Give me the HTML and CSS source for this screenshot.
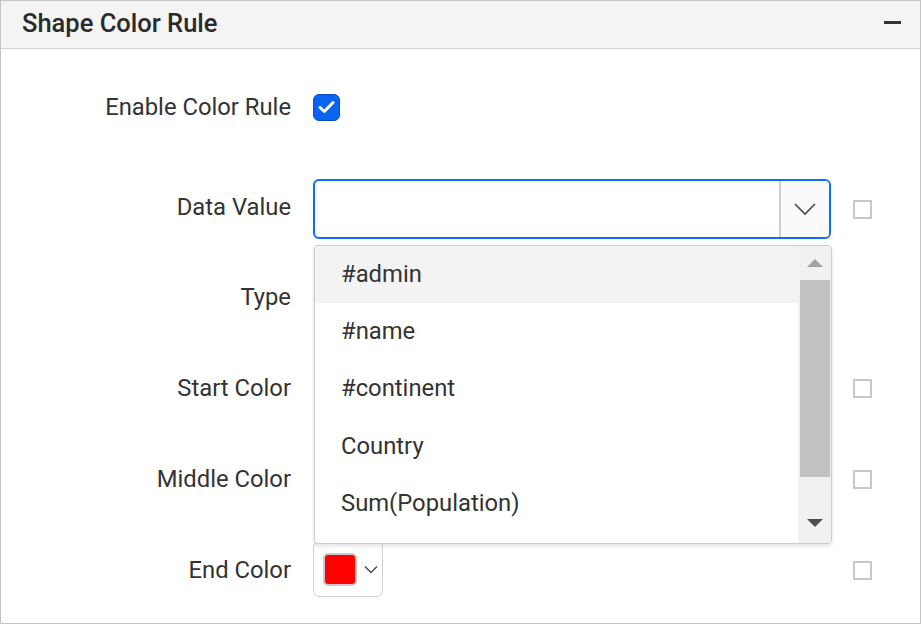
FILE: index.html
```html
<!DOCTYPE html>
<html>
<head>
<meta charset="utf-8">
<link rel="stylesheet" href="styles.css">
</head>
<body>
<div class="panel">
  <div class="header">
    <span class="title">Shape Color Rule</span>
    <span class="collapse"></span>
  </div>
  <div class="content">
    <div class="row row-enable">
      <div class="label">Enable Color Rule</div>
      <div class="control">
        <span class="check-on">
          <svg width="17" height="14" viewBox="0 0 17 14"><path d="M2 7.5 L6.3 11.5 L15 2.5" fill="none" stroke="#fff" stroke-width="3" stroke-linecap="round" stroke-linejoin="round"/></svg>
        </span>
      </div>
      <div></div>
    </div>
    <div class="row row-data">
      <div class="label label-up">Data Value</div>
      <div class="control rel">
        <div class="combo">
          <div class="combo-input"></div>
          <div class="combo-btn">
            <svg width="24" height="14" viewBox="0 0 24 14"><path d="M2 2 L12 12 L22 2" fill="none" stroke="#3d4b5c" stroke-width="1.6"/></svg>
          </div>
        </div>
        <div class="popup">
          <ul class="list">
            <li class="item active">#admin</li>
            <li class="item">#name</li>
            <li class="item">#continent</li>
            <li class="item">Country</li>
            <li class="item">Sum(Population)</li>
          </ul>
          <div class="scrollbar">
            <span class="arrow-up"></span>
            <span class="thumb"></span>
            <span class="arrow-down"></span>
          </div>
        </div>
      </div>
      <div class="cb-cell"><span class="cb"></span></div>
    </div>
    <div class="row row-type">
      <div class="label">Type</div>
      <div class="control"></div>
      <div></div>
    </div>
    <div class="row">
      <div class="label">Start Color</div>
      <div class="control"></div>
      <div class="cb-cell"><span class="cb"></span></div>
    </div>
    <div class="row">
      <div class="label">Middle Color</div>
      <div class="control"></div>
      <div class="cb-cell"><span class="cb"></span></div>
    </div>
    <div class="row row-end">
      <div class="label">End Color</div>
      <div class="control control-top">
        <div class="picker">
          <span class="swatch"></span>
          <svg width="14" height="9" viewBox="0 0 14 9"><path d="M1 1.5 L7 7.5 L13 1.5" fill="none" stroke="#3d4b5c" stroke-width="1.4"/></svg>
        </div>
      </div>
      <div class="cb-cell"><span class="cb"></span></div>
    </div>
  </div>
</div>
</body>
</html>
```
FILE: styles.css
```css
* { box-sizing: border-box; }
html, body { margin: 0; padding: 0; background: #fff; }
body { font-family: Roboto, "Liberation Sans", sans-serif; color: #333; }

.panel {
  width: 921px;
  height: 624px;
  border: 1px solid #c4c4c4;
  background: #fff;
  overflow: hidden;
}

.header {
  height: 48px;
  background: #f4f4f4;
  border-bottom: 1px solid #d2d2d2;
  display: flex;
  align-items: center;
  justify-content: space-between;
  padding: 0 19px 0 21px;
}
.title {
  font-size: 25.5px;
  font-weight: 500;
  color: #2b2b2b;
  margin-top: -3px;
}
.collapse {
  width: 17px;
  height: 3px;
  background: #333;
  margin-top: -4px;
}

.content {
  padding-top: 28px;
  display: flex;
  flex-direction: column;
  gap: 31px;
}

.row {
  display: grid;
  grid-template-columns: 290px 518px 40px;
  column-gap: 22px;
  height: 60px;
  align-items: center;
}
.row-enable { margin-bottom: 11px; }
.row-data { margin-bottom: -3px; }

.label {
  text-align: right;
  font-size: 23.8px;
  color: #333;
}
.label-up { margin-top: -4px; }

.control { height: 100%; display: flex; align-items: center; }
.control-top { align-items: flex-start; padding-top: 1px; }
.rel { position: relative; }

.check-on {
  width: 27px;
  height: 27px;
  border-radius: 6px;
  background: #0b63f3;
  border: 1px solid #0a4fc4;
  display: flex;
  align-items: center;
  justify-content: center;
}

.combo {
  width: 519px;
  height: 60px;
  border: 2px solid #0d6efd;
  border-radius: 6px;
  display: flex;
  overflow: hidden;
  background: #fff;
}
.combo-input { flex: 1; }
.combo-btn {
  width: 50px;
  border-left: 2px solid #cfcfcf;
  background: #fafafa;
  display: flex;
  align-items: center;
  justify-content: center;
}

.popup {
  position: absolute;
  left: 1px;
  top: 66px;
  width: 518px;
  height: 299px;
  border: 1px solid #cbcbcb;
  border-radius: 4px;
  background: #fff;
  box-shadow: 0 2px 4px rgba(0,0,0,0.12);
  display: flex;
  overflow: hidden;
  z-index: 10;
}
.list {
  list-style: none;
  margin: 0;
  padding: 0;
  flex: 1;
}
.item {
  height: 57.2px;
  line-height: 57px;
  padding-left: 26px;
  font-size: 23.8px;
  color: #333;
}
.item.active { background: #f3f3f3; }

.scrollbar {
  width: 33px;
  background: #f1f1f1;
  display: flex;
  flex-direction: column;
  align-items: center;
  padding-top: 13px;
}
.arrow-up {
  width: 0; height: 0;
  border-left: 8px solid transparent;
  border-right: 8px solid transparent;
  border-bottom: 8px solid #a3a3a3;
}
.thumb {
  width: 30px;
  height: 197px;
  background: #c1c1c1;
  margin-top: 13px;
}
.arrow-down {
  width: 0; height: 0;
  border-left: 8px solid transparent;
  border-right: 8px solid transparent;
  border-top: 8px solid #505050;
  margin-top: 42px;
}

.cb-cell { display: flex; align-items: center; height: 100%; }
.cb {
  width: 19px;
  height: 19px;
  border: 2px solid #c8c8c8;
  background: #fff;
}

.picker {
  width: 70px;
  height: 56px;
  border: 1px solid #d2d2d2;
  border-radius: 6px;
  display: flex;
  align-items: center;
  padding-left: 9px;
  gap: 7px;
}
.swatch {
  width: 34px;
  height: 33px;
  background: #ff0000;
  border: 2px solid #c9c9c9;
  border-radius: 5px;
}
```
